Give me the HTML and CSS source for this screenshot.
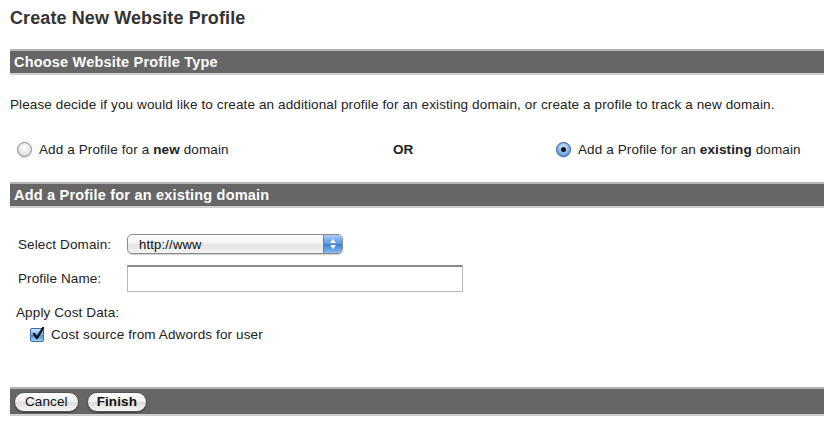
FILE: index.html
```html
<!DOCTYPE html>
<html>
<head>
<meta charset="utf-8">
<link rel="stylesheet" href="styles.css">
</head>
<body>
<div class="page">
  <h1 class="title">Create New Website Profile</h1>
  <div class="bar bar-top">Choose Website Profile Type</div>
  <p class="intro">Please decide if you would like to create an additional profile for an existing domain, or create a profile to track a new domain.</p>
  <div class="choice-row">
    <label class="choice choice-left"><span class="radio"></span><span>Add a Profile for a <b>new</b> domain</span></label>
    <span class="or">OR</span>
    <label class="choice choice-right"><span class="radio checked"></span><span>Add a Profile for an <b>existing</b> domain</span></label>
  </div>
  <div class="bar bar-mid">Add a Profile for an existing domain</div>
  <div class="form">
    <div class="field field-select">
      <span class="label">Select Domain:</span>
      <span class="select"><span class="select-text">http://www</span><span class="select-arrows"><svg width="8" height="12" viewBox="0 0 8 12"><path d="M4 1 L7 5 L1 5 Z" fill="#fff"/><path d="M4 11 L7 7 L1 7 Z" fill="#fff"/></svg></span></span>
    </div>
    <div class="field field-input">
      <span class="label">Profile Name:</span>
      <span class="textbox"></span>
    </div>
    <div class="cost-label">Apply Cost Data:</div>
    <div class="cost-row"><span class="checkbox"><svg width="14" height="14" viewBox="0 0 14 14"><path d="M3 7 L6 11 L12 1" stroke="#111" stroke-width="2.4" fill="none" stroke-linecap="round" stroke-linejoin="round"/></svg></span><span>Cost source from Adwords for user</span></div>
  </div>
  <div class="bar bar-bottom">
    <span class="btn">Cancel</span>
    <span class="btn btn-finish">Finish</span>
  </div>
</div>
</body>
</html>
```
FILE: styles.css
```css
html, body {
  margin: 0;
  padding: 0;
  background: #fff;
}
body {
  font-family: "Liberation Sans", Arial, Helvetica, sans-serif;
  font-size: 13.5px;
  letter-spacing: 0.12px;
  color: #222;
}
.page {
  width: 814px;
  padding: 0 0 0 10px;
}
.title {
  margin: 0;
  padding-top: 8px;
  height: 40px;
  box-sizing: border-box;
  font-size: 18px;
  letter-spacing: 0.1px;
  font-weight: bold;
  color: #333;
  line-height: 20px;
}
.bar {
  background: #666;
  color: #fff;
  font-weight: bold;
  font-size: 14.5px;
  letter-spacing: 0.2px;
  border-top: 2px solid #b4b4b4;
  border-bottom: 2px solid #cfcfcf;
  box-sizing: border-box;
  padding-left: 4px;
  display: flex;
  align-items: center;
}
.bar-top {
  margin-top: 9px;
  height: 26px;
}
.intro {
  margin: 0;
  padding-top: 22px;
  line-height: 16px;
  height: 55px;
  box-sizing: border-box;
  color: #222;
}
.choice-row {
  display: flex;
  align-items: center;
  height: 38px;
  color: #222;
}
.choice {
  display: flex;
  align-items: center;
}
.choice-left {
  margin-left: 7px;
  width: 376px;
}
.or {
  font-weight: bold;
  width: 163px;
}
.radio {
  width: 13px;
  height: 13px;
  flex: none;
  border-radius: 50%;
  border: 1px solid #8a8a8a;
  background: radial-gradient(circle at 50% 35%, #ffffff 0%, #e4e4e4 60%, #c8c8c8 100%);
  margin-right: 7px;
  display: inline-flex;
  align-items: center;
  justify-content: center;
  box-shadow: 0 1px 1px rgba(0,0,0,0.15);
}
.radio.checked {
  border-color: #2f5b9a;
  background: radial-gradient(circle at 50% 35%, #d6ebff 0%, #7fb3ea 55%, #3b7fd4 100%);
}
.radio.checked::after {
  content: "";
  width: 5px;
  height: 5px;
  border-radius: 50%;
  background: #111;
}
.bar-mid {
  margin-top: 14px;
  height: 26px;
}
.form {
  padding-top: 26px;
  height: 179px;
  box-sizing: border-box;
}
.field {
  display: flex;
  align-items: center;
}
.label {
  width: 117px;
  padding-left: 8px;
  box-sizing: border-box;
}
.field-select {
  height: 20px;
}
.select {
  width: 216px;
  height: 20px;
  box-sizing: border-box;
  border: 1px solid #8c8c8c;
  border-radius: 5px;
  background: linear-gradient(#ffffff, #f2f2f2 50%, #e2e2e2 51%, #f4f4f4);
  display: flex;
  align-items: center;
  overflow: hidden;
  box-shadow: 0 1px 1px rgba(0,0,0,0.2);
}
.select-text {
  flex: 1;
  padding-left: 11px;
  font-size: 13px;
  letter-spacing: 0.2px;
  color: #111;
}
.select-arrows {
  width: 18px;
  height: 100%;
  background: linear-gradient(#a6cdf5, #5b9ae2 50%, #3d7fd6 51%, #86bbf0);
  display: flex;
  align-items: center;
  justify-content: center;
  border-left: 1px solid #5a84b8;
}
.field-input {
  margin-top: 11px;
  height: 27px;
}
.textbox {
  width: 336px;
  height: 27px;
  box-sizing: border-box;
  border: 1px solid #b8b8b8;
  border-top: 2px solid #8a8a8a;
  background: #fff;
}
.cost-label {
  margin-top: 13px;
  padding-left: 6px;
  line-height: 16px;
}
.cost-row {
  margin-top: 6px;
  padding-left: 20px;
  display: flex;
  align-items: center;
  line-height: 16px;
}
.checkbox {
  width: 14px;
  height: 14px;
  flex: none;
  box-sizing: border-box;
  border: 1px solid #3e6aa8;
  border-radius: 2px;
  background: linear-gradient(#cfe5fb, #6ea8e8 50%, #4b8ddc 51%, #a9d0f6);
  margin-right: 7px;
  position: relative;
  display: inline-flex;
}
.checkbox svg {
  position: absolute;
  left: 0;
  top: -2px;
}
.bar-bottom {
  height: 29px;
  padding-left: 4px;
  gap: 8px;
}
.btn {
  display: inline-flex;
  align-items: center;
  justify-content: center;
  height: 20px;
  box-sizing: border-box;
  border: 1px solid #555;
  border-radius: 10px;
  background: linear-gradient(#ffffff, #f0f0f0 50%, #dcdcdc 51%, #f6f6f6);
  color: #111;
  font-size: 13.5px;
  font-weight: normal;
  letter-spacing: 0.1px;
  padding: 0 10px;
  box-shadow: 0 1px 1px rgba(0,0,0,0.4);
}
.btn-finish {
  font-weight: bold;
  padding: 0 9px;
}
```
